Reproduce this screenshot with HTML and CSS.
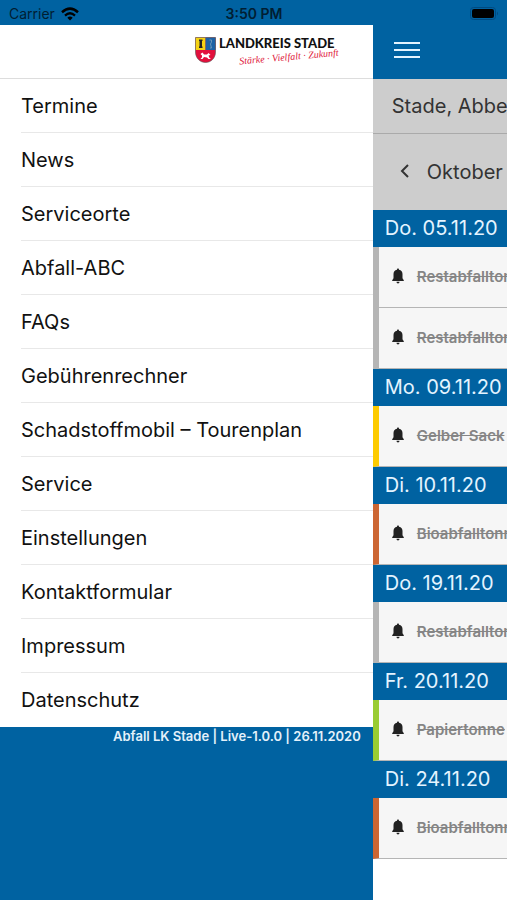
FILE: index.html
```html
<!DOCTYPE html>
<html lang="de">
<head>
    <meta charset="utf-8"/>
    <meta name="viewport" content="width=device-width, initial-scale=1"/>
    <title>Abfall LK Stade</title>
    <link rel="stylesheet" href="styles.css">
</head>
<body>
<svg class="symbols" aria-hidden="true">
    <symbol id="bell" viewBox="0 0 12 16">
        <path d="M6 0.5C5.3 0.5 5 1 5 1.7C2.600 2.200 1.500 3.800 1.500 6V10.300L0.2 12.2V13H11.8V12.2L10.500 10.300V6C10.500 3.800 9.400 2.200 7 1.7C7 1 6.7 0.5 6 0.5ZM4.5 13.8C4.5 14.7 5.2 15.4 6 15.4S7.5 14.7 7.5 13.8Z"/>
    </symbol>
</svg>
<div class="status-bar">
    <div class="carrier">
        <span>Carrier</span>
        <svg width="18" height="14" viewBox="0 0 18 14" aria-hidden="true">
            <path d="M1 5.2Q9 -2 17 5.2" fill="none" stroke="#000" stroke-width="2.5"/>
            <path d="M4 8.6Q9 4 14 8.6" fill="none" stroke="#000" stroke-width="2.3"/>
            <path d="M6.3 10.7Q9 8.5 11.7 10.7L9 13.5Z"/>
        </svg>
    </div>
    <span class="time">3:50 PM</span>
    <div class="battery">
        <svg width="29" height="14" viewBox="0 0 29 14" aria-hidden="true">
            <rect x="0.5" y="0.5" width="25" height="12" rx="3" fill="none" stroke="#004a80"/>
            <rect x="2" y="2" width="22" height="9" rx="2"/>
            <path d="M27 4.5Q29 6.5 27 8.5Z" fill="#004a80"/>
        </svg>
    </div>
</div>
<div class="app">
    <div class="drawer">
        <header class="drawer-header">
            <a class="logo" href="#">
                <svg width="21" height="26" viewBox="0 0 21 26" aria-hidden="true">
                    <path d="M0.5 0.5H20.5V15C20.5 21 16 25.5 10.5 25.5S0.5 21 0.5 15Z" fill="#e2103c"/>
                    <path d="M0.5 0.5H10.5V13H0.5Z" fill="#f5d313"/>
                    <path d="M10.5 0.5H20.5V13H10.5Z" fill="#1c62a5"/>
                    <path d="M4 2.5H7.5V4H7V9.5H7.5V11H4V9.5H4.5V4H4Z" fill="#222"/>
                    <path d="M14.5 3H16.5V5L15.5 7L16.5 11H15" fill="none" stroke="#6b96b8"/>
                    <path d="M5.5 17L7.5 15.5L9 17.5H12L13.500 16L15.5 18L13.500 18.500L14.500 21L16 22H13.500L12 20.5L9 20L7.500 22H5.500L7 20.2V18.5Z" fill="#fff"/>
                    <path d="M0.5 0.5H20.5V15C20.5 21 16 25.5 10.5 25.5S0.5 21 0.5 15Z" fill="none" stroke="#555" stroke-width="0.6"/>
                </svg>
                <span class="logo-text">
                    <span class="logo-name">LANDKREIS STADE</span>
                    <span class="logo-slogan">Stärke · Vielfalt · Zukunft</span>
                </span>
            </a>
        </header>
        <nav class="menu">
            <a href="#">Termine</a>
            <a href="#">News</a>
            <a href="#">Serviceorte</a>
            <a href="#">Abfall-ABC</a>
            <a href="#">FAQs</a>
            <a href="#">Gebührenrechner</a>
            <a href="#">Schadstoffmobil – Tourenplan</a>
            <a href="#">Service</a>
            <a href="#">Einstellungen</a>
            <a href="#">Kontaktformular</a>
            <a href="#">Impressum</a>
            <a href="#">Datenschutz</a>
        </nav>
        <div class="version">Abfall LK Stade | Live-1.0.0 | 26.11.2020</div>
    </div>
    <main class="content">
        <div class="toolbar">
            <button class="menu-button" type="button" aria-label="Menü"><i></i><i></i><i></i></button>
        </div>
        <div class="location">Stade, Abbe</div>
        <div class="month">
            <button class="prev" type="button" aria-label="Vorheriger Monat">
                <svg width="10" height="16" viewBox="0 0 10 16" aria-hidden="true">
                    <path d="M8 2L2 8L8 14" fill="none" stroke="#333" stroke-width="2"/>
                </svg>
            </button>
            <span>Oktober</span>
        </div>

        <h2>Do. 05.11.20</h2>
        <div class="entry rest"><svg class="bell"><use href="#bell"/></svg><s>Restabfalltonne</s></div>
        <div class="entry rest"><svg class="bell"><use href="#bell"/></svg><s>Restabfalltonne</s></div>

        <h2>Mo. 09.11.20</h2>
        <div class="entry gelb"><svg class="bell"><use href="#bell"/></svg><s>Gelber Sack</s></div>

        <h2>Di. 10.11.20</h2>
        <div class="entry bio"><svg class="bell"><use href="#bell"/></svg><s>Bioabfalltonne</s></div>

        <h2>Do. 19.11.20</h2>
        <div class="entry rest"><svg class="bell"><use href="#bell"/></svg><s>Restabfalltonne</s></div>

        <h2>Fr. 20.11.20</h2>
        <div class="entry papier"><svg class="bell"><use href="#bell"/></svg><s>Papiertonne</s></div>

        <h2>Di. 24.11.20</h2>
        <div class="entry bio"><svg class="bell"><use href="#bell"/></svg><s>Bioabfalltonne</s></div>
    </main>
</div>
</body>
</html>
```
FILE: styles.css
```css
* {
    box-sizing: border-box;
}

body {
    margin: 0;
    min-height: 100vh;
    display: flex;
    flex-direction: column;
    font-family: Inter, 'Helvetica Neue', Helvetica, Arial, sans-serif;
    font-size: 20px;
    color: #111;
    background: #0062a1;
}

a {
    color: inherit;
    text-decoration: none;
}

button {
    padding: 0;
    border: 0;
    background: none;
}

.symbols {
    position: absolute;
    width: 0;
    height: 0;
}

.status-bar {
    display: grid;
    grid-template-columns: 1fr auto 1fr;
    align-items: center;
    height: 25px;
    padding: 2px 8px 0 9px;
    font-size: 14px;
    color: #001e33;
}

.status-bar .carrier {
    display: flex;
    align-items: center;
    gap: 6px;
}

.status-bar .time {
    font-weight: 600;
}

.status-bar .battery {
    display: flex;
    justify-content: flex-end;
}

.app {
    flex: 1;
    display: grid;
    grid-template-columns: minmax(0, 25fr) minmax(0, 9fr);
}

.drawer-header {
    display: flex;
    justify-content: flex-end;
    height: 54px;
    padding: 12px 34px 0 0;
    background: #fff;
    border-bottom: 1px solid #ddd;
}

.logo {
    display: flex;
    gap: 3px;
}

.logo-text {
    display: flex;
    flex-direction: column;
    gap: 2px;
}

.logo-name {
    font-family: Lato, sans-serif;
    font-size: 13px;
    line-height: 13px;
    font-weight: 900;
}

.logo-slogan {
    padding-left: 20px;
    font-family: 'Liberation Serif', serif;
    font-size: 10px;
    line-height: 12px;
    font-style: italic;
    color: #e0203c;
    transform: rotate(-5deg);
}

.menu {
    padding-left: 21px;
    background: #fff;
}

.menu a {
    display: block;
    height: 54px;
    line-height: 55px;
    border-bottom: 1px solid #e8e8e8;
}

.menu a:last-child {
    border-bottom: 0;
}

.version {
    padding-right: 12px;
    font-size: 13px;
    line-height: 18px;
    font-weight: 600;
    text-align: right;
    color: #e4f1fa;
}

.content {
    overflow: hidden;
    white-space: nowrap;
    background: #fff;
}

.toolbar {
    display: flex;
    align-items: center;
    height: 54px;
    padding: 0 21px 5px;
    background: #0062a1;
}

.menu-button {
    display: flex;
    flex-direction: column;
    gap: 5px;
    width: 26px;
}

.menu-button i {
    height: 2px;
    background: #e4f4ff;
}

.location {
    height: 55px;
    padding-left: 19px;
    line-height: 55px;
    color: #333;
    background: #cdcdcd;
    border-bottom: 1px solid #aaa;
}

.month {
    display: flex;
    align-items: center;
    gap: 17px;
    height: 76px;
    padding-left: 27px;
    color: #333;
    background: #cdcdcd;
}

.content h2 {
    margin: 0;
    padding-left: 12px;
    font-size: 20px;
    line-height: 37px;
    font-weight: normal;
    color: #e4f4ff;
    background: #0062a1;
}

.entry {
    display: flex;
    align-items: center;
    gap: 12px;
    height: 61px;
    padding: 0 0 2px 12px;
    font-size: 15px;
    font-weight: 600;
    color: #858585;
    background: #f6f6f6;
    border-left: 6px solid #b5b5b5;
    border-bottom: 1px solid #b5b5b5;
}

.entry .bell {
    flex: none;
    width: 14px;
    height: 16px;
    fill: #222;
}

.entry.gelb {
    border-left-color: #fdcb00;
}

.entry.bio {
    border-left-color: #cc6633;
}

.entry.papier {
    border-left-color: #99cc33;
}
```
